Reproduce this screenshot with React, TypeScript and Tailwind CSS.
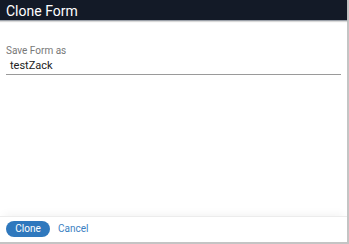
export default function App() {
  return (
    <div
      className="flex h-[244px] w-[349px] flex-col border-b-2 border-r-2 border-[#c4c4c4] bg-white"
      style={{ fontFamily: "Roboto, 'Liberation Sans', sans-serif" }}
    >
      {/* Title bar */}
      <div className="flex h-[21px] items-center border-b border-[#9aa0a8] bg-[#131a27] px-[6px] pt-[1px] shadow-[0_1px_1px_rgba(0,0,0,0.15)]">
        <span className="text-[14px] leading-none text-white">Clone Form</span>
      </div>

      {/* Body */}
      <div className="flex-1 px-[6px] pt-[24px]">
        <label className="block text-[10px] leading-[12px] text-[#777]">Save Form as</label>
        <div className="mt-[2px] border-b border-[#9a9a9a] pb-[2px] pl-[4px] text-[11px] leading-[13px] text-[#222]">
          testZack
        </div>
      </div>

      {/* Footer */}
      <div className="flex h-[26px] items-center gap-[8px] border-t border-[#ececec] px-[6px] pb-[1px] shadow-[0_-6px_8px_-4px_rgba(0,0,0,0.05)]">
        <button
          type="button"
          className="flex h-[16px] w-[44px] items-center justify-center rounded-full bg-[#2f78bd] text-[10px] leading-none text-white"
        >
          Clone
        </button>
        <button type="button" className="text-[10px] leading-none text-[#3a7fc2]">
          Cancel
        </button>
      </div>
    </div>
  );
}
